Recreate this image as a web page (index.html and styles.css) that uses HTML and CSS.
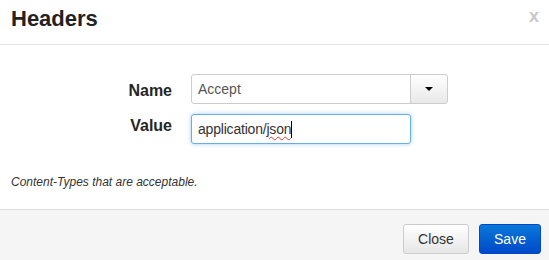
FILE: index.html
```html
<!DOCTYPE html>
<html>
<head>
<meta charset="utf-8">
<title>Headers</title>
<link rel="stylesheet" href="styles.css">
</head>
<body>
<div class="modal">
  <div class="modal-header">
    <h3 class="title">Headers</h3>
    <span class="close">x</span>
  </div>
  <div class="modal-body">
    <div class="form">
      <label class="label label-name">Name</label>
      <div class="combo">
        <div class="field combo-field">Accept</div>
        <div class="combo-btn"><span class="caret"></span></div>
      </div>
      <label class="label label-value">Value</label>
      <div class="field field-focus">application/<span class="misspelled">json</span><span class="cursor"></span></div>
    </div>
    <p class="help">Content-Types that are acceptable.</p>
  </div>
  <div class="modal-footer">
    <button class="btn btn-default">Close</button>
    <button class="btn btn-primary">Save</button>
  </div>
</div>
</body>
</html>
```

FILE: styles.css
```css
* { box-sizing: border-box; }
html, body { margin: 0; padding: 0; background: #fff; }
body {
  font-family: "Liberation Sans", Arial, sans-serif;
  color: #333;
  width: 549px;
  height: 260px;
  overflow: hidden;
}
.modal {
  width: 549px;
  height: 260px;
  display: flex;
  flex-direction: column;
}
.modal-header {
  height: 45px;
  border-bottom: 1px solid #e5e5e5;
  display: flex;
  justify-content: space-between;
  align-items: flex-start;
  padding: 0 10px 0 11px;
}
.title {
  margin: 0;
  font-size: 22px;
  font-weight: bold;
  line-height: 25px;
  padding-top: 6px;
  color: #222;
}
.close {
  font-size: 18px;
  font-weight: bold;
  color: #c9c9c9;
  line-height: 20px;
  padding-top: 6px;
}
.modal-body {
  flex: 1;
  padding-top: 29px;
}
.form {
  display: grid;
  grid-template-columns: 172px 257px;
  column-gap: 19px;
  row-gap: 10px;
}
.label {
  text-align: right;
  font-size: 16px;
  font-weight: bold;
  line-height: 20px;
  color: #262626;
  align-self: start;
}
.label-name { padding-top: 7px; }
.label-value { padding-top: 2px; }
.combo {
  display: flex;
  height: 30px;
}
.field {
  height: 30px;
  border: 1px solid #ccc;
  border-radius: 3px;
  font-size: 14px;
  line-height: 28px;
  padding: 0 6px;
  color: #555;
  background: #fff;
  white-space: nowrap;
}
.combo-field {
  width: 220px;
  border-radius: 3px 0 0 3px;
}
.combo-btn {
  width: 38px;
  height: 30px;
  margin-left: -1px;
  border: 1px solid #ccc;
  border-radius: 0 3px 3px 0;
  background: linear-gradient(to bottom, #ffffff, #e8e8e8);
  display: flex;
  align-items: center;
  justify-content: center;
}
.caret {
  width: 0;
  height: 0;
  border-left: 4px solid transparent;
  border-right: 4px solid transparent;
  border-top: 4px solid #000;
}
.field-focus {
  width: 220px;
  border-color: #66afe9;
  box-shadow: 0 0 4px rgba(102, 175, 233, 0.6);
  color: #333;
  letter-spacing: -0.2px;
}
.misspelled {
  text-decoration: underline wavy #e0383c;
  text-decoration-thickness: 1px;
  text-underline-offset: 2px;
}
.cursor {
  display: inline-block;
  width: 1px;
  height: 17px;
  background: #000;
  vertical-align: -4px;
}
.help {
  margin: 30px 0 0 11px;
  font-size: 12px;
  font-style: italic;
  line-height: 16px;
  color: #333;
}
.modal-footer {
  height: 51px;
  border-top: 1px solid #ddd;
  background: #f5f5f5;
  display: flex;
  justify-content: flex-end;
  align-items: flex-start;
  gap: 10px;
  padding: 14px 8px 0 0;
}
.btn {
  height: 30px;
  padding: 0;
  font-family: "Liberation Sans", Arial, sans-serif;
  font-size: 14px;
  border-radius: 3px;
  cursor: pointer;
}
.btn-default {
  width: 66px;
  color: #333;
  border: 1px solid #ccc;
  background: linear-gradient(to bottom, #ffffff, #e6e6e6);
}
.btn-primary {
  width: 62px;
  color: #fff;
  border: 1px solid #0048c8;
  background: linear-gradient(to bottom, #0a78d8, #0049c9);
}
```
